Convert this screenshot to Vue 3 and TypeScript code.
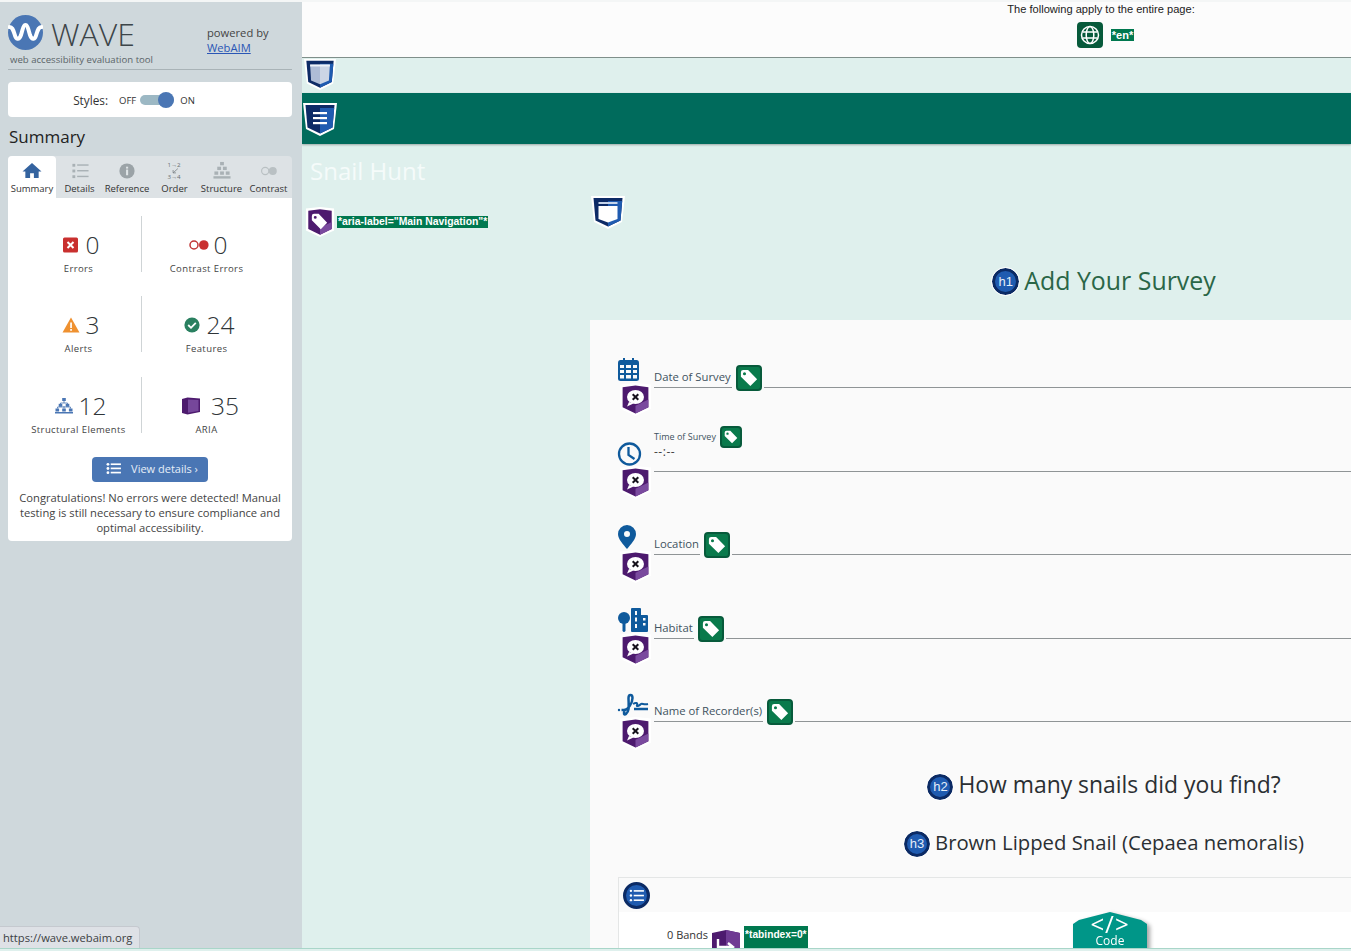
<template>
  <svg class="sprite" aria-hidden="true">
    <symbol id="shield-base" viewBox="0 0 34 34">
      <path d="M0 1H34L31 27L17 34L3 27Z" fill="#fff" />
      <path d="M2.500 3H31.500L29.500 25.500L17 31.500L4.500 25.500Z" fill="#0d2b66" />
      <path d="M17 6H31.200L29.500 25.500L17 31.500Z" fill="#1f5bb0" />
    </symbol>
    <symbol id="shield-purple" viewBox="0 0 30 32">
      <path d="M0 1.500L15 0L30 1.500V25L15 32L0 25Z" fill="#fff" />
      <path d="M2.500 4L15 2.500L27.500 4V23.500L15 29.500L2.500 23.500Z" fill="#4d1a6e" />
      <path d="M15 29.500L27.500 23.500V16L15 22Z" fill="#7a4a9e" />
    </symbol>
    <symbol id="tag-shape" viewBox="0 0 20 20">
      <path d="M1 3.500Q1 1 3.500 1H9L19 11.500L11.500 19L1 8.500ZM5 3.500A1.700 1.700 0 1 0 5 6.900A1.700 1.700 0 1 0 5 3.500Z" fill="#fff" fill-rule="evenodd" />
    </symbol>
  </svg>

  <div class="top-edge"></div>
  <div class="app">
    <aside class="sidebar">
      <header class="brand">
        <svg class="brand-logo" viewBox="0 0 35 35">
          <circle cx="17.500" cy="17.500" r="17.500" fill="#4a76b4" />
          <path d="M1.500 12C4 12 5 14 6.500 19C8 25 11 25.500 13 20C14.500 15 15.500 10 17.500 10C19.500 10 20.500 15 22 20C24 25.500 27 25 28.500 19C30 14 31 12 33.500 12" fill="none" stroke="#fff" stroke-width="4" stroke-linecap="round" />
        </svg>
        <span class="brand-name">WAVE</span>
        <span class="brand-powered">powered by<br /><a class="brand-link" href="#">WebAIM</a></span>
        <span class="brand-sub">web accessibility evaluation tool</span>
      </header>

      <div class="styles-card">
        <span class="styles-label">Styles:</span>
        <span class="styles-state">OFF</span>
        <span class="toggle"><span class="toggle-thumb"></span></span>
        <span class="styles-state">ON</span>
      </div>

      <h2 class="summary-title">Summary</h2>

      <nav class="tabs">
        <div v-for="tab in tabs" :key="tab.name" class="tab" :class="{ 'is-active': tab.name === 'Summary' }" :style="{ width: tab.width + 'px' }">
          <svg class="tab-icon" viewBox="0 0 24 20">
            <g v-if="tab.name === 'Summary'" fill="#34639f">
              <path d="M12 2L22 11H19V18H14V13H10V18H5V11H2Z" />
            </g>
            <g v-else-if="tab.name === 'Details'" fill="#a9b1b5">
              <rect x="4" y="3" width="3" height="3" /><rect x="9" y="3.500" width="12" height="1.500" />
              <rect x="4" y="9" width="3" height="3" /><rect x="9" y="9.500" width="12" height="1.500" />
              <rect x="4" y="15" width="3" height="3" /><rect x="9" y="15.500" width="12" height="1.500" />
            </g>
            <g v-else-if="tab.name === 'Reference'">
              <circle cx="12" cy="10.500" r="8" fill="#9ba3a7" />
              <rect x="11" y="9" width="2.200" height="6" fill="#dfe4e6" /><rect x="11" y="6" width="2.200" height="2" fill="#dfe4e6" />
            </g>
            <g v-else-if="tab.name === 'Order'" class="order-icon">
              <text x="4" y="6.500">1→2</text>
              <path d="M15 8L10 12.500M10 9.500V12.500H13" fill="none" stroke="#757d81" stroke-width="0.800" />
              <text x="4" y="19">3→4</text>
            </g>
            <g v-else-if="tab.name === 'Structure'" fill="#a9b1b5">
              <rect x="10" y="1" width="4" height="3.500" /><rect x="7" y="6" width="4" height="3.500" /><rect x="13" y="6" width="4" height="3.500" />
              <rect x="4" y="11" width="4" height="3.500" /><rect x="10" y="11" width="4" height="3.500" /><rect x="16" y="11" width="4" height="3.500" />
              <rect x="3" y="16" width="18" height="2.500" />
            </g>
            <g v-else>
              <circle cx="8" cy="10.500" r="3.800" fill="none" stroke="#b9c0c3" stroke-width="1.200" />
              <circle cx="16" cy="10.500" r="4.200" fill="#b9c0c3" />
            </g>
          </svg>
          <span class="tab-name">{{ tab.name }}</span>
        </div>
      </nav>

      <section class="summary-card">
        <div class="stats">
          <div v-for="stat in stats" :key="stat.label" class="stat">
            <div class="stat-main" :class="{ 'stat-main-aria': stat.kind === 'aria' }">
              <svg class="stat-icon" viewBox="0 0 20 18">
                <g v-if="stat.kind === 'error'">
                  <rect x="2" y="1.500" width="15" height="15" rx="1.500" fill="#c9302f" />
                  <path d="M6.500 6L12.500 12M12.500 6L6.500 12" stroke="#fff" stroke-width="2" />
                </g>
                <g v-else-if="stat.kind === 'contrast'">
                  <circle cx="5" cy="9" r="4" fill="none" stroke="#c13636" stroke-width="1.500" />
                  <circle cx="14.800" cy="9" r="4.800" fill="#c9302f" />
                </g>
                <g v-else-if="stat.kind === 'alert'">
                  <path d="M10 1.500L18.500 16.500H1.500Z" fill="#ef9130" />
                  <rect x="9.200" y="6.500" width="1.700" height="5.500" fill="#fff" /><rect x="9.200" y="13" width="1.700" height="1.800" fill="#fff" />
                </g>
                <g v-else-if="stat.kind === 'feature'">
                  <circle cx="10" cy="9" r="7.600" fill="#2a8060" />
                  <path d="M6.200 9L9 11.800L13.800 6.800" fill="none" stroke="#fff" stroke-width="1.800" />
                </g>
                <g v-else-if="stat.kind === 'structure'" fill="#4a76b4">
                  <rect x="8.200" y="1" width="3.600" height="3" />
                  <path d="M10 4V6M6.500 7.500V6H13.500V7.500M3.500 11.500V10H16.500V11.500M10 9V11.500" fill="none" stroke="#4a76b4" stroke-width="0.800" />
                  <rect x="4.700" y="6.800" width="3.600" height="3" /><rect x="11.700" y="6.800" width="3.600" height="3" />
                  <rect x="1.500" y="11.500" width="3.600" height="3" /><rect x="8.200" y="11.500" width="3.600" height="3" /><rect x="14.900" y="11.500" width="3.600" height="3" />
                  <rect x="1" y="15" width="18" height="1.500" />
                </g>
                <g v-else>
                  <path d="M1 2L6.500 0.500L19 1.500V15L6.500 17.500L1 16Z" fill="#4d1a6e" />
                  <path d="M7 2.500L17.500 3V14L7 15.800Z" fill="#76479b" />
                </g>
              </svg>
              <span class="stat-value">{{ stat.value }}</span>
            </div>
            <div class="stat-label">{{ stat.label }}</div>
          </div>
        </div>

        <a class="details-btn" href="#">
          <svg class="details-icon" viewBox="0 0 16 14" fill="#fff">
            <circle cx="2" cy="2.500" r="1.500" /><rect x="5" y="1.500" width="11" height="1.800" />
            <circle cx="2" cy="7" r="1.500" /><rect x="5" y="6" width="11" height="1.800" />
            <circle cx="2" cy="11.500" r="1.500" /><rect x="5" y="10.500" width="11" height="1.800" />
          </svg>
          View details ›
        </a>
        <p class="congrats">Congratulations! No errors were detected! Manual testing is still necessary to ensure compliance and optimal accessibility.</p>
      </section>
    </aside>

    <main class="page">
      <div class="page-top">
        <p class="page-note">The following apply to the entire page:</p>
        <div class="page-lang">
          <span class="tag-box globe-box">
            <svg class="globe" viewBox="0 0 20 20" fill="none" stroke="#fff" stroke-width="1.500">
              <circle cx="10" cy="10" r="8.500" />
              <ellipse cx="10" cy="10" rx="3.800" ry="8.500" />
              <path d="M2.500 7H17.500M2.500 13H17.500" />
            </svg>
          </span>
          <span class="wave-label">*en*</span>
        </div>
      </div>

      <div class="landmark">
        <svg class="shield shield-top" viewBox="0 0 34 34">
          <use href="#shield-base" />
          <path d="M6.500 7H17V28L7.500 24Z" fill="#aebcd6" />
          <path d="M17 7H27.500L26.500 24L17 28Z" fill="#cbd5e5" />
          <rect x="6.500" y="7" width="21" height="2" fill="#eef2f8" />
        </svg>
      </div>

      <div class="band">
        <svg class="shield" viewBox="0 0 34 34">
          <use href="#shield-base" />
          <rect x="10" y="10" width="14" height="2.200" fill="#fff" /><rect x="10" y="15" width="14" height="2.200" fill="#fff" /><rect x="10" y="20" width="14" height="2.200" fill="#fff" />
        </svg>
      </div>

      <div class="site-title">Snail Hunt</div>

      <div class="nav-row">
        <div class="nav-tag">
          <svg class="purple-icon"><use href="#shield-purple" /><use href="#tag-shape" x="6" y="6" width="17" height="17" /></svg>
          <span class="wave-label wave-label-aria">*aria-label="Main Navigation"*</span>
        </div>
        <svg class="shield shield-nav" viewBox="0 0 34 34">
          <use href="#shield-base" />
          <rect x="7.500" y="7" width="19" height="2" fill="#c5d4ea" />
          <path d="M7.500 11H26.500V24L17 27.500L7.500 24Z" fill="#fff" />
        </svg>
      </div>

      <h1 class="heading heading-1"><span class="level">h1</span>Add Your Survey</h1>

      <section class="survey-card">
        <div class="fields">
          <div v-for="field in fields" :key="field.label" class="field-row">
            <div class="field-icons">
              <svg class="field-icon" viewBox="0 0 31 28">
                <g v-if="field.icon === 'date'" fill="#0f5a9c" transform="translate(-1 0)">
                  <path fill-rule="evenodd" d="M1 6Q1 3 3.500 3H6V1H8V3H15V1H17V3H19.500Q22 3 22 6V22Q22 24 19.500 24H3.500Q1 24 1 22ZM3 8V11H7V8ZM9 8V11H14V8ZM16 8V11H20V8ZM3 13V16H7V13ZM9 13V16H14V13ZM16 13V16H20V13ZM3 18V21.500H7V18ZM9 18V21.500H14V18ZM16 18V21.500H20V18Z" />
                </g>
                <g v-else-if="field.icon === 'time'" fill="none" stroke="#0f5a9c">
                  <circle cx="11.500" cy="13" r="10.500" stroke-width="2.300" />
                  <path d="M10.500 6V14L16.500 18" stroke-width="2.300" />
                </g>
                <g v-else-if="field.icon === 'place'" fill="#0f5a9c" transform="translate(-1 0)">
                  <path fill-rule="evenodd" d="M10 1A9 9 0 0 1 19 10C19 15 14 20 10 25C6 20 1 15 1 10A9 9 0 0 1 10 1ZM10 7A3 3 0 1 0 10 13A3 3 0 1 0 10 7Z" />
                </g>
                <g v-else-if="field.icon === 'habitat'" fill="#0f5a9c">
                  <circle cx="6" cy="10" r="6" />
                  <rect x="4.500" y="10" width="3" height="14" rx="1.400" />
                  <path fill-rule="evenodd" d="M13 1Q13 0 14 0H22Q23 0 23 1V7H29Q30 7 30 8V23Q30 24 29 24H14Q13 24 13 23ZM17 3V7H19V3ZM17 9.500V13.500H19V9.500ZM25 10V12.500H27.500V10ZM25 15V17.500H27.500V15ZM17 16V20H19V16Z" />
                </g>
                <g v-else fill="none" stroke="#0f5a9c" stroke-width="2.500">
                  <circle cx="1" cy="19" r="1.200" fill="#0f5a9c" stroke="none" />
                  <path d="M3.500 19H6C10 19 14.500 12 14.500 7C14.500 3 10.500 3 10.500 7C10.500 13 12 20 8 23C6 24.500 5 22 7 20" />
                  <path d="M15 13C18 11 20 12 19 14C18 16 21 15 23 13C24 12 26 14 30 13" stroke-width="2" />
                  <path d="M16 18H30" />
                </g>
              </svg>
              <svg class="purple-field">
                <use href="#shield-purple" />
                <ellipse cx="15.500" cy="14" rx="8.500" ry="7" fill="#fff" />
                <path d="M9 19L7 23.500L13.500 20.500Z" fill="#fff" />
                <path d="M12.700 11.200L18.300 16.800M18.300 11.200L12.700 16.800" stroke="#16121c" stroke-width="2" />
              </svg>
            </div>
            <div class="field-body" :class="{ 'is-time': field.icon === 'time' }">
              <div class="field-head">
                <label class="field-label">{{ field.label }}</label>
                <span class="tag-box" :class="{ 'tag-box-sm': field.icon === 'time' }">
                  <svg class="tag-glyph"><use href="#tag-shape" /></svg>
                </span>
              </div>
              <span v-if="field.icon === 'time'" class="time-value">--:--</span>
              <div v-if="field.icon !== 'time'" class="field-rest"></div>
            </div>
          </div>
        </div>

        <h2 class="heading heading-2"><span class="level">h2</span>How many snails did you find?</h2>
        <h3 class="heading heading-3"><span class="level">h3</span>Brown Lipped Snail (Cepaea nemoralis)</h3>

        <div class="snail-card">
          <div class="snail-head">
            <span class="list-badge">
              <svg viewBox="0 0 16 14" fill="#fff" class="list-glyph">
                <circle cx="2" cy="2" r="1.300" /><rect x="5" y="1.200" width="11" height="1.700" />
                <circle cx="2" cy="7" r="1.300" /><rect x="5" y="6.200" width="11" height="1.700" />
                <circle cx="2" cy="12" r="1.300" /><rect x="5" y="11.200" width="11" height="1.700" />
              </svg>
            </span>
          </div>
          <div class="snail-body">
            <span class="bands-label">0 Bands</span>
            <svg class="tab-order" viewBox="0 0 28 30">
              <path d="M0 3L14 0L28 3V30H0Z" fill="#4d1a6e" />
              <path d="M14 0L28 3V30H14Z" fill="#6f3b93" />
              <path d="M6 9V17H20M16 13L21 17L16 21" fill="none" stroke="#fff" stroke-width="2.400" />
            </svg>
            <span class="wave-label wave-label-tab">*tabindex=0*</span>
          </div>
          <div class="code-wrap">
            <div class="code-tab">
              <span class="code-mark">&lt;/&gt;</span>
              <span class="code-text">Code</span>
            </div>
          </div>
        </div>
      </section>
    </main>

    <div class="status-bubble">https://wave.webaim.org</div>
  </div>
  <div class="bottom-edge"></div>
</template>

<script setup lang="ts">
interface Tab {
  name: string
  width: number
}

interface Stat {
  kind: string
  value: number
  label: string
}

interface Field {
  label: string
  icon: 'date' | 'time' | 'place' | 'habitat' | 'name'
}

const tabs: Tab[] = [
  { name: 'Summary', width: 48 },
  { name: 'Details', width: 47 },
  { name: 'Reference', width: 48 },
  { name: 'Order', width: 47 },
  { name: 'Structure', width: 47 },
  { name: 'Contrast', width: 47 }
]

const stats: Stat[] = [
  { kind: 'error', value: 0, label: 'Errors' },
  { kind: 'contrast', value: 0, label: 'Contrast Errors' },
  { kind: 'alert', value: 3, label: 'Alerts' },
  { kind: 'feature', value: 24, label: 'Features' },
  { kind: 'structure', value: 12, label: 'Structural Elements' },
  { kind: 'aria', value: 35, label: 'ARIA' }
]

const fields: Field[] = [
  { label: 'Date of Survey', icon: 'date' },
  { label: 'Time of Survey', icon: 'time' },
  { label: 'Location', icon: 'place' },
  { label: 'Habitat', icon: 'habitat' },
  { label: 'Name of Recorder(s)', icon: 'name' }
]
</script>

<style>
html,
body {
  margin: 0;
  overflow: hidden;
  background: #dff0ed;
}
</style>

<style scoped>
.sprite {
  display: none;
}

.top-edge {
  height: 2px;
  background: #f4f6f6;
}

.bottom-edge {
  height: 3px;
  background: #dff0ed;
  border-top: 1px solid #a9d6c9;
  box-sizing: border-box;
}

.app {
  position: relative;
  display: flex;
  height: 946px;
  overflow: hidden;
  font-family: "Open Sans", "Noto Sans", sans-serif;
  color: #333;
}

/* sidebar */
.sidebar {
  flex: none;
  width: 302px;
  box-sizing: border-box;
  padding: 0 10px 0 8px;
  background: #cfd8dc;
}

.brand {
  display: grid;
  grid-template-columns: 43px 156px 1fr;
  grid-template-rows: 42px auto;
  height: 68px;
  box-sizing: border-box;
  padding-top: 13px;
  border-bottom: 1px solid #a9b3b7;
}

.brand-logo {
  width: 35px;
  height: 35px;
}

.brand-name {
  font-size: 32px;
  font-weight: 300;
  line-height: 38px;
  color: #3d4549;
}

.brand-powered {
  font-size: 11.200px;
  line-height: 15px;
  padding-top: 10px;
  color: #444;
  white-space: nowrap;
}

.brand-link {
  color: #2a56b5;
}

.brand-sub {
  grid-column: 1 / 3;
  margin: -3px 0 0 2px;
  font-size: 9.600px;
  line-height: 12px;
  color: #5b6468;
  white-space: nowrap;
}

.styles-card {
  display: flex;
  align-items: center;
  justify-content: center;
  gap: 4px;
  height: 35px;
  margin-top: 12px;
  padding: 1px 32px 0 0;
  box-sizing: border-box;
  background: #fff;
  border-radius: 4px;
  font-size: 9.500px;
}

.styles-label {
  margin-right: 7px;
  font-size: 11.800px;
}

.toggle {
  position: relative;
  width: 34px;
  height: 10px;
  margin-right: 2px;
  background: #9cb8c4;
  border-radius: 5px;
}

.toggle-thumb {
  position: absolute;
  top: -3px;
  right: 0;
  width: 16px;
  height: 16px;
  background: #4a76b4;
  border-radius: 50%;
}

.summary-title {
  margin: 8px 0 0 1px;
  font-size: 17px;
  font-weight: 400;
  line-height: 23px;
  color: #222;
}

.tabs {
  display: flex;
  height: 42px;
  margin-top: 8px;
  background: #dde2e5;
  border-radius: 4px 4px 0 0;
}

.tab {
  display: flex;
  flex-direction: column;
  align-items: center;
  flex: none;
  box-sizing: border-box;
  padding-top: 5px;
}

.tab.is-active {
  background: #fff;
  border-radius: 4px 4px 0 0;
}

.tab-icon {
  width: 24px;
  height: 19px;
}

.order-icon text {
  font-size: 6.500px;
  fill: #666e72;
}

.tab-name {
  margin-top: 2px;
  font-size: 9.500px;
  line-height: 13px;
  white-space: nowrap;
}

.summary-card {
  height: 343px;
  padding-top: 18px;
  box-sizing: border-box;
  background: #fff;
  border-radius: 0 0 4px 4px;
}

.stats {
  display: grid;
  grid-template-columns: 134px 150px;
  grid-template-rows: 80px 81px 81px;
}

.stat {
  height: 56px;
  text-align: center;
}

.stat:nth-child(odd) {
  box-sizing: border-box;
  padding-left: 8px;
  border-right: 1px solid #cfd4d6;
}

.stat:nth-child(even) {
  box-sizing: border-box;
  padding-right: 21px;
}

.stat-main {
  display: flex;
  align-items: center;
  justify-content: center;
  gap: 5px;
  height: 28px;
  margin-top: 15px;
  padding-left: 3px;
}

.stat-main-aria {
  gap: 10px;
  padding-left: 7px;
}

.stat-icon {
  flex: none;
  width: 20px;
  height: 18px;
}

.stat-value {
  font-size: 24.500px;
  font-weight: 300;
  line-height: 28px;
  color: #2f3538;
}

.stat-label {
  margin-top: 4px;
  font-size: 9.500px;
  line-height: 12px;
  letter-spacing: 0.400px;
  color: #444;
  white-space: nowrap;
}

.details-btn {
  display: flex;
  align-items: center;
  justify-content: center;
  gap: 10px;
  box-sizing: border-box;
  width: 116px;
  height: 25px;
  margin: -1px auto 0;
  padding: 0 0 2px 4px;
  background: #4a76b4;
  border-radius: 4px;
  color: #e6eef8;
  font-size: 11px;
  text-decoration: none;
}

.details-icon {
  width: 15px;
  height: 13px;
}

.congrats {
  margin: 8px 6px 0;
  font-size: 11.200px;
  line-height: 15px;
  text-align: center;
  color: #444;
}

/* page */
.page {
  flex: 1;
  min-width: 0;
  overflow: hidden;
  background: #dff0ed;
}

.page-top {
  box-sizing: border-box;
  height: 56px;
  padding-left: 549px;
  background: #fcfcfc;
  border-bottom: 1px solid #7f8f8a;
  text-align: center;
  font-family: "Liberation Sans", Arial, sans-serif;
}

.page-note {
  margin: 0;
  padding-top: 1px;
  font-size: 11.100px;
  line-height: 13px;
  color: #222;
}

.page-lang {
  display: flex;
  align-items: center;
  justify-content: center;
  gap: 8px;
  margin-top: 6px;
  padding-left: 9px;
}

.wave-label {
  padding: 0 1px;
  background: #00784f;
  color: #fff;
  font-family: "Liberation Sans", Arial, sans-serif;
  font-size: 11px;
  font-weight: 700;
  line-height: 12px;
  white-space: nowrap;
}

.landmark {
  height: 35px;
  box-sizing: border-box;
  padding-left: 2px;
}

.shield {
  display: block;
  flex: none;
  width: 34px;
  height: 34px;
}

.shield-top {
  width: 32px;
  height: 32px;
}

.shield-nav {
  margin-top: -2px;
}

.band {
  height: 51px;
  box-sizing: border-box;
  padding: 9px 0 0 1px;
  background: #006b5c;
  box-shadow: 0 1px 2px rgba(0, 0, 0, 0.3);
}

.site-title {
  height: 53px;
  box-sizing: border-box;
  padding: 11px 0 0 8px;
  font-size: 24px;
  line-height: 32px;
  color: #f5fbfa;
}

.nav-row {
  display: flex;
  align-items: flex-start;
  height: 71px;
}

.nav-tag {
  display: flex;
  align-items: center;
  gap: 2px;
  width: 289px;
  margin-top: 10px;
  padding-left: 3px;
  box-sizing: border-box;
}

.wave-label-aria {
  margin-top: -1px;
  font-size: 10.400px;
}

.purple-icon {
  display: block;
  flex: none;
  width: 30px;
  height: 30px;
}

.heading {
  display: flex;
  align-items: center;
  justify-content: center;
  margin: 0;
  padding-left: 555px;
  font-weight: 400;
  white-space: nowrap;
}

.level {
  flex: none;
  display: flex;
  align-items: center;
  justify-content: center;
  box-sizing: border-box;
  width: 27px;
  height: 27px;
  margin: 3px 5px 0 0;
  border: 3px solid #0b2a64;
  border-radius: 50%;
  background: #1f5bb0;
  color: #e6eef8;
  font-family: "Liberation Sans", Arial, sans-serif;
  font-size: 13px;
  outline: 1px solid #fff;
}

.heading-1 {
  box-sizing: border-box;
  height: 52px;
  padding-bottom: 28px;
  font-size: 24.900px;
  color: #2a6647;
}

.survey-card {
  box-sizing: border-box;
  height: 700px;
  margin-left: 288px;
  padding: 37px 0 0 28px;
  background: #fafafa;
}

.fields {
  display: flex;
  flex-direction: column;
  gap: 27.500px;
}

.field-row {
  display: grid;
  grid-template-columns: 36px 1fr;
  height: 56px;
}

.field-icons {
  display: flex;
  flex-direction: column;
}

.field-icon {
  display: block;
  flex: none;
  width: 31px;
  height: 28px;
  overflow: visible;
}

.purple-field {
  display: block;
  flex: none;
  width: 31px;
  height: 33px;
  margin: -2.500px 0 0 2px;
}

.field-body {
  display: flex;
  align-items: flex-end;
  height: 30px;
  font-size: 11.300px;
  color: #3e5260;
}

.field-body.is-time {
  flex-direction: column;
  align-items: stretch;
  justify-content: flex-end;
  height: 31px;
  border-bottom: 1px solid #8f9496;
  box-sizing: border-box;
}

.field-head {
  display: flex;
  align-items: flex-end;
  gap: 4px;
}

.field-label {
  padding: 0 1px 3px 0;
  line-height: 14px;
  white-space: nowrap;
  box-shadow: 0 1px 0 #8f9496;
}

.field-rest {
  flex: 1;
  margin-left: 2px;
  border-bottom: 1px solid #8f9496;
  margin-bottom: -1px;
}

.is-time .field-head {
  align-items: center;
  margin-bottom: -3px;
}

.is-time .field-label {
  padding: 0;
  font-size: 9px;
  box-shadow: none;
}

.time-value {
  padding: 0 0 12px;
  font-size: 12px;
  line-height: 14px;
  letter-spacing: 0.500px;
  color: #444;
}

.tag-box {
  display: flex;
  align-items: center;
  justify-content: center;
  flex: none;
  box-sizing: border-box;
  width: 26px;
  height: 26px;
  margin-bottom: -4px;
  background: #0a7a4c;
  border: 2px solid #075a3b;
  border-radius: 4px;
}

.tag-box-sm {
  width: 22px;
  height: 22px;
  margin-bottom: 0;
}

.tag-glyph {
  width: 18px;
  height: 18px;
}

.tag-box-sm .tag-glyph {
  width: 14px;
  height: 14px;
}

.globe-box {
  margin: 0;
  background: #075a3b;
}

.globe {
  width: 20px;
  height: 20px;
}

.heading-2 {
  height: 30px;
  margin-top: 23px;
  padding-left: 239px;
  font-size: 22.900px;
  line-height: 30px;
  color: #2a2f33;
}

.heading-3 {
  height: 30px;
  margin-top: 27px;
  padding-left: 239px;
  font-size: 20.300px;
  line-height: 30px;
  color: #2a2f33;
}

.heading-2 .level,
.heading-3 .level {
  width: 26px;
  height: 26px;
}

.snail-card {
  position: relative;
  margin-top: 20px;
  background: #fff;
  border-top: 1px solid #e4e6e6;
  border-left: 1px solid #e4e6e6;
  height: 120px;
}

.snail-head {
  height: 34px;
  box-sizing: border-box;
  padding: 4px 0 0 4px;
  background: #fafafa;
}

.list-badge {
  display: flex;
  align-items: center;
  justify-content: center;
  box-sizing: border-box;
  width: 27px;
  height: 27px;
  background: #1f5bb0;
  border: 3px solid #0b2a64;
  border-radius: 50%;
}

.list-glyph {
  width: 15px;
  height: 13px;
}

.snail-body {
  display: flex;
  align-items: flex-start;
  padding: 14px 0 0 48px;
  font-size: 11px;
  color: #333;
}

.bands-label {
  padding-top: 2px;
  line-height: 14px;
}

.tab-order {
  flex: none;
  width: 28px;
  height: 30px;
  margin: 4px 4px 0 4px;
}

.wave-label-tab {
  display: block;
  height: 30px;
  padding-top: 3px;
  font-size: 10.200px;
}

.code-wrap {
  position: absolute;
  top: 34px;
  left: 454px;
  filter: drop-shadow(3px 2px 2px rgba(0, 0, 0, 0.35));
}

.code-tab {
  display: flex;
  flex-direction: column;
  align-items: center;
  width: 74px;
  height: 50px;
  padding-top: 1px;
  box-sizing: border-box;
  background: #009688;
  clip-path: polygon(50% 0, 92% 16%, 100% 24%, 100% 100%, 0 100%, 0 24%, 8% 16%);
  color: #fff;
}

.code-mark {
  font-size: 24px;
  line-height: 21px;
  letter-spacing: 1px;
}

.code-text {
  font-size: 12px;
  line-height: 13px;
}

.status-bubble {
  position: absolute;
  left: 0;
  bottom: 0;
  padding: 0 7px 0 3px;
  height: 21px;
  line-height: 21px;
  background: #dee1e6;
  border-top: 1px solid #c5c9cf;
  border-right: 1px solid #c5c9cf;
  border-radius: 0 4px 0 0;
  font-size: 11.200px;
  color: #3c4043;
}
</style>
